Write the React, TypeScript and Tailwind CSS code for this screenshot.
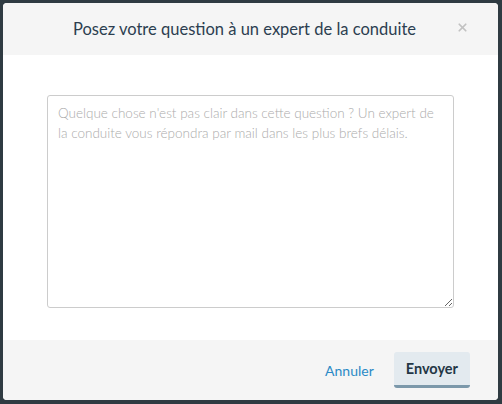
import { X } from "lucide-react";

export default function App() {
  return (
    <div className="w-[502px] h-[404px] bg-[#2f3b42] pt-[3px] pl-[3px] pr-[4px] pb-[4px] font-['Lato',sans-serif]">
      <div className="h-full flex flex-col bg-white rounded-[4px] overflow-hidden">
        <div className="h-[52px] shrink-0 bg-[#f5f5f5] flex items-center relative pr-[12px]">
          <h2 className="w-full text-center text-[16.5px] text-[#2c3e50] leading-none">
            Posez votre question à un expert de la conduite
          </h2>
          <button className="absolute right-[29px] top-[18px] text-[#c2c2c2]">
            <X size={13} strokeWidth={3.2} />
          </button>
        </div>
        <div className="flex-1 px-[44px] pt-[40px] pb-[32px]">
          <textarea
            className="w-full h-full border border-[#cccccc] rounded-[3px] px-[10px] py-[7px] text-[13.5px] leading-[20px] font-light text-[#555] placeholder:text-[#ababab] outline-none"
            placeholder="Quelque chose n'est pas clair dans cette question ? Un expert de la conduite vous répondra par mail dans les plus brefs délais."
          />
        </div>
        <div className="h-[60px] shrink-0 bg-[#f5f5f5] flex items-center justify-end gap-[20px] pr-[28px]">
          <a className="text-[14px] text-[#2b8ac6] cursor-pointer">Annuler</a>
          <button className="h-[36px] px-[12px] bg-[#e3eaef] border-b-[3px] border-[#7b98aa] rounded-[3px] text-[14.5px] font-bold text-[#243746]">
            Envoyer
          </button>
        </div>
      </div>
    </div>
  );
}
